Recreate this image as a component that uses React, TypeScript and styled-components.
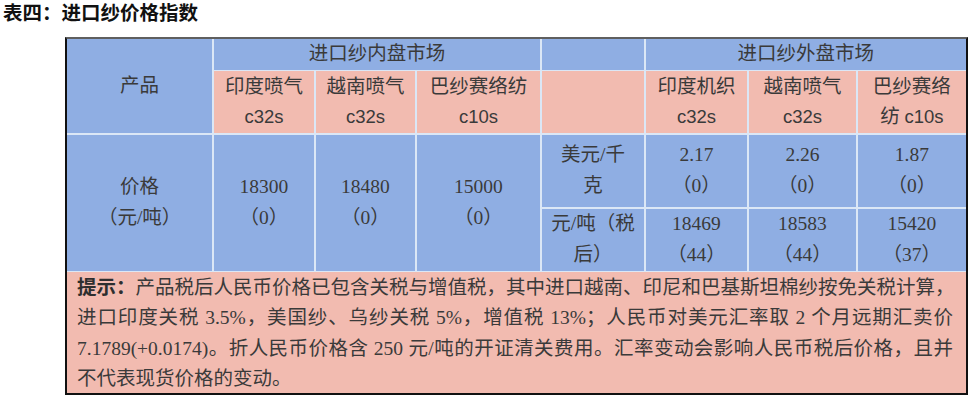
import React from "react";
import styled, { createGlobalStyle } from "styled-components";

const Global = createGlobalStyle`
  html, body { margin: 0; padding: 0; background: #ffffff; }
  body { font-family: "Liberation Serif", "Noto Sans CJK SC", serif; color: #3a3a3a; }
`;

const Page = styled.div`
  width: 973px;
  height: 400px;
  overflow: hidden;
  background: #fff;
`;

const Title = styled.h1`
  margin: 0;
  padding: 0 0 0 3px;
  height: 37px;
  font-size: 19.5px;
  line-height: 27px;
  font-weight: 700;
  color: #111;
  font-family: "Liberation Serif", "Noto Sans CJK SC", serif;
`;

const Table = styled.div`
  margin-left: 65px;
  width: 903px;
  box-sizing: border-box;
  display: grid;
  grid-template-columns: 145.25px 100.5px 99.5px 123.5px 102.5px 101.5px 107.5px 108.25px;
  grid-template-rows: 30.5px 62px 72.5px 62px 121px;
  gap: 1.5px;
  background: #dbe7f6;
  border-top: 2px solid #5f5f5f;
  border-left: 2px solid #111;
  border-right: 2px solid #111;
  border-bottom: 2px solid #111;
`;

const Cell = styled.div<{ $tone: "blue" | "pink"; $col: string; $row: string }>`
  grid-column: ${(p) => p.$col};
  grid-row: ${(p) => p.$row};
  background: ${(p) => (p.$tone === "blue" ? "#8faee3" : "#f2bbb0")};
  display: flex;
  align-items: center;
  justify-content: center;
  text-align: center;
  font-size: 19.5px;
  line-height: 30.5px;
  color: #3a3a3a;
  overflow: hidden;
`;

const Spec = styled.span`
  font-family: "Liberation Sans", "Noto Sans CJK SC", sans-serif;
  font-size: 18.5px;
`;

const Note = styled.div`
  grid-column: 1 / 9;
  grid-row: 5;
  background: #f2bbb0;
  padding: 1px 13px 0 10px;
  font-size: 19.5px;
  line-height: 30.3px;
  color: #3a3a3a;
`;

const NoteLine = styled.div<{ $last?: boolean }>`
  text-align: ${(p) => (p.$last ? "left" : "justify")};
  text-align-last: ${(p) => (p.$last ? "left" : "justify")};
  white-space: nowrap;
`;

const Strong = styled.b`
  font-weight: 700;
  color: #2e2e2e;
`;

type Head = { top: string; bottom: string };

const innerHeads: Head[] = [
  { top: "印度喷气", bottom: "c32s" },
  { top: "越南喷气", bottom: "c32s" },
  { top: "巴纱赛络纺", bottom: "c10s" },
];

const outerHeads: Head[] = [
  { top: "印度机织", bottom: "c32s" },
  { top: "越南喷气", bottom: "c32s" },
  { top: "巴纱赛络", bottom: "纺 c10s" },
];

const innerPrices = [
  { price: "18300", change: "（0）" },
  { price: "18480", change: "（0）" },
  { price: "15000", change: "（0）" },
];

const outerUsd = [
  { price: "2.17", change: "（0）" },
  { price: "2.26", change: "（0）" },
  { price: "1.87", change: "（0）" },
];

const outerRmb = [
  { price: "18469", change: "（44）" },
  { price: "18583", change: "（44）" },
  { price: "15420", change: "（37）" },
];

const renderSpec = (s: string) => {
  const m = s.match(/^(.*?)(c\d+s)$/);
  if (!m) return s;
  return (
    <>
      {m[1]}
      <Spec>{m[2]}</Spec>
    </>
  );
};

export default function App() {
  return (
    <Page>
      <Global />
      <Title>表四：进口纱价格指数</Title>
      <Table>
        <Cell $tone="blue" $col="1" $row="1 / 3">产品</Cell>
        <Cell $tone="blue" $col="2 / 5" $row="1">进口纱内盘市场</Cell>
        <Cell $tone="blue" $col="5" $row="1" />
        <Cell $tone="blue" $col="6 / 9" $row="1">进口纱外盘市场</Cell>

        {innerHeads.map((h, i) => (
          <Cell key={"ih" + i} $tone="pink" $col={String(i + 2)} $row="2">
            <div>
              {h.top}
              <br />
              {renderSpec(h.bottom)}
            </div>
          </Cell>
        ))}
        <Cell $tone="pink" $col="5" $row="2" />
        {outerHeads.map((h, i) => (
          <Cell key={"oh" + i} $tone="pink" $col={String(i + 6)} $row="2">
            <div>
              {h.top}
              <br />
              {renderSpec(h.bottom)}
            </div>
          </Cell>
        ))}

        <Cell $tone="blue" $col="1" $row="3 / 5">
          <div>
            价格
            <br />
            （元/吨）
          </div>
        </Cell>
        {innerPrices.map((p, i) => (
          <Cell key={"ip" + i} $tone="blue" $col={String(i + 2)} $row="3 / 5">
            <div>
              {p.price}
              <br />
              {p.change}
            </div>
          </Cell>
        ))}
        <Cell $tone="blue" $col="5" $row="3">
          <div>
            美元/千
            <br />
            克
          </div>
        </Cell>
        {outerUsd.map((p, i) => (
          <Cell key={"ou" + i} $tone="blue" $col={String(i + 6)} $row="3">
            <div>
              {p.price}
              <br />
              {p.change}
            </div>
          </Cell>
        ))}
        <Cell $tone="blue" $col="5" $row="4">
          <div>
            元/吨（税
            <br />
            后）
          </div>
        </Cell>
        {outerRmb.map((p, i) => (
          <Cell key={"or" + i} $tone="blue" $col={String(i + 6)} $row="4">
            <div>
              {p.price}
              <br />
              {p.change}
            </div>
          </Cell>
        ))}

        <Note>
          <NoteLine>
            <Strong>提示：</Strong>产品税后人民币价格已包含关税与增值税，其中进口越南、印尼和巴基斯坦棉纱按免关税计算，
          </NoteLine>
          <NoteLine>
            进口印度关税 3.5%，美国纱、乌纱关税 5%，增值税 13%；人民币对美元汇率取 2 个月远期汇卖价
          </NoteLine>
          <NoteLine>
            7.1789(+0.0174)。折人民币价格含 250 元/吨的开证清关费用。汇率变动会影响人民币税后价格，且并
          </NoteLine>
          <NoteLine $last>不代表现货价格的变动。</NoteLine>
        </Note>
      </Table>
    </Page>
  );
}
